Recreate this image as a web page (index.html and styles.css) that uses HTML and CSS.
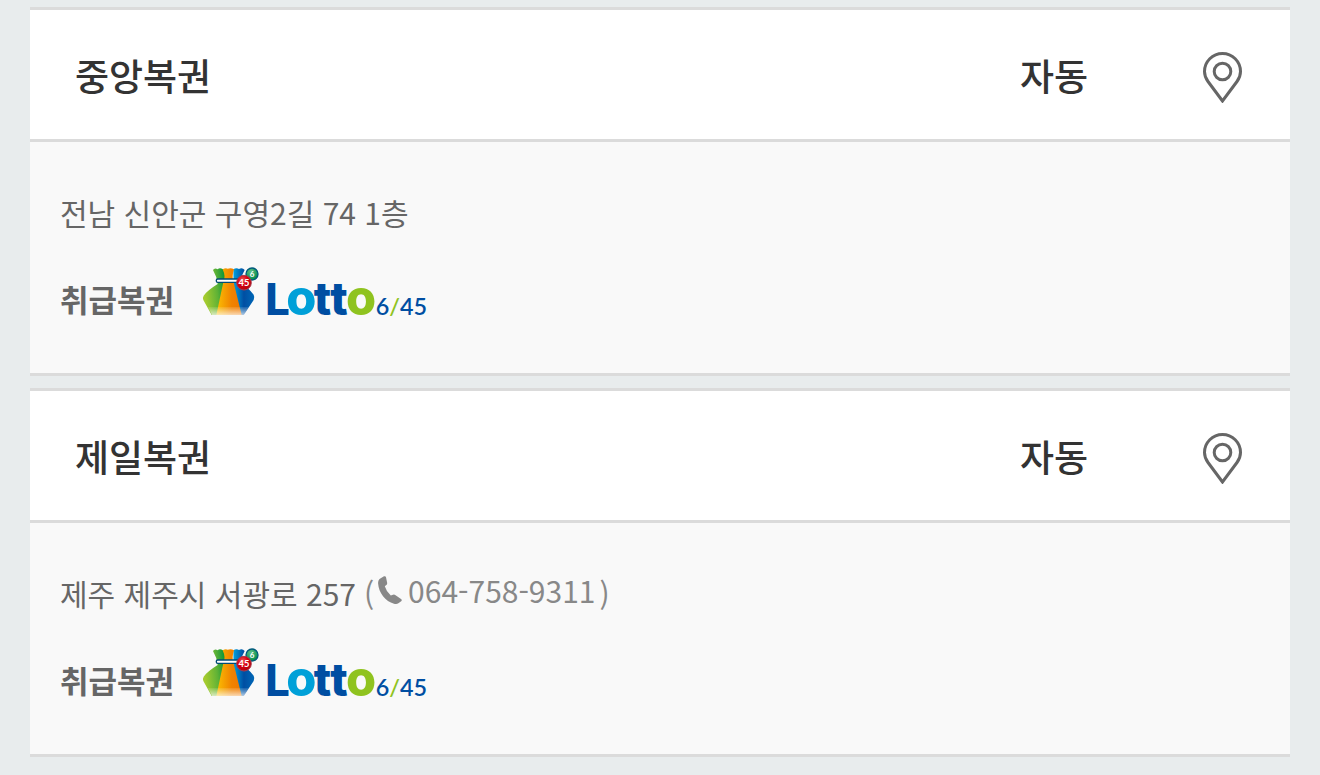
FILE: index.html
```html
<!DOCTYPE html>
<html lang="ko">
  <head>
    <meta charset="utf-8" />
    <meta name="viewport" content="width=device-width, initial-scale=1" />
    <title>복권 판매점</title>
    <link rel="stylesheet" href="styles.css" />
  </head>
  <body>
    <!-- shared icons -->
    <svg class="sprite" aria-hidden="true">
      <defs>
        <linearGradient id="bag-green" x1="0" x2="1" y1="0.2" y2="0">
          <stop offset="0" stop-color="#a5cb2f" />
          <stop offset="0.5" stop-color="#5fb236" />
          <stop offset="0.9" stop-color="#00913a" />
        </linearGradient>
        <linearGradient id="bag-orange" x1="0" x2="1">
          <stop offset="0" stop-color="#fbc003" />
          <stop offset="0.6" stop-color="#f08300" />
          <stop offset="1" stop-color="#ee7800" />
        </linearGradient>
        <linearGradient id="bag-blue" x1="0" x2="1">
          <stop offset="0" stop-color="#00a0dc" />
          <stop offset="0.5" stop-color="#004ea2" />
          <stop offset="1" stop-color="#0068b7" />
        </linearGradient>
        <linearGradient id="bag-shine" x1="0" y1="0" x2="0" y2="1">
          <stop offset="0" stop-color="#fff" stop-opacity="0.1" />
          <stop offset="1" stop-color="#fff" stop-opacity="0.7" />
        </linearGradient>
        <radialGradient id="ball-red" cx="0.4" cy="0.3" r="0.7">
          <stop offset="0" stop-color="#ef5a5a" />
          <stop offset="0.5" stop-color="#d7000f" />
          <stop offset="1" stop-color="#b5000c" />
        </radialGradient>
        <radialGradient id="ball-green" cx="0.4" cy="0.3" r="0.7">
          <stop offset="0" stop-color="#5fc08a" />
          <stop offset="1" stop-color="#008c45" />
        </radialGradient>
      </defs>
      <symbol id="pin" viewBox="0 0 39 51">
        <path d="M19.500 49 L5 29.500 C2.800 26.500 1.500 23.500 1.500 19.500 A18 18 0 0 1 37.500 19.500 C37.500 23.500 36.200 26.500 34 29.500 Z" fill="none" stroke="#666" stroke-width="3" />
        <circle cx="19.500" cy="19.500" r="8.300" fill="none" stroke="#666" stroke-width="3" />
      </symbol>
      <symbol id="phone" viewBox="0 0 24 28">
        <path d="M1.500 3 L6 .3 Q7.600 -.3 8 1.300 L9.200 7 Q9.300 8.500 8 9.200 L6.800 10.200 Q8.300 15.500 12.800 19.600 L15 18.800 Q16.200 18.200 17.200 19 L23 23 Q24.400 24 23.200 25.200 L20 27.500 Q18.400 28.400 16 27.700 C7.500 25.500 .6 16.500 .1 7.500 Q-.1 4.500 1.500 3Z" fill="#888" />
      </symbol>
      <symbol id="bag" viewBox="0 0 210 180">
        <path d="M54 30 Q59 22 68 28 Q74 22 84 28 L98 28 L88 78 L66 165 L50 165 L25 120 Q22 114 26 107 Q36 92 68 72 Q66 50 54 30Z" fill="url(#bag-green)" />
        <path d="M115 28 Q124 22 132 27 Q142 22 149 30 Q137 50 135 68 Q160 82 176 104 Q180 112 176 120 L146 165 L132 165 L116 78Z" fill="url(#bag-blue)" />
        <path d="M83 28 Q92 22 98 26 Q108 22 117 28 Q110 50 115 64 L140 165 L64 165 L85 66 Q93 50 83 28Z" fill="url(#bag-orange)" />
        <path d="M39 141 H161 L147 165 H51Z" fill="url(#bag-shine)" />
        <rect x="64" y="57" width="68" height="10" rx="4" fill="#fff" stroke="#004b75" stroke-width="4" />
        <circle cx="171" cy="42" r="18" fill="url(#ball-green)" stroke="#005b7c" stroke-width="4" />
        <circle cx="147" cy="68" r="22" fill="url(#ball-red)" stroke="#a83b4d" stroke-width="3" />
      </symbol>
    </svg>

    <main class="store-list">
      <article class="store">
        <header class="store-head">
          <h2 class="store-name">중앙복권</h2>
          <span class="store-type">자동</span>
          <a class="store-map" href="#" aria-label="중앙복권 지도 보기">
            <svg class="icon-pin"><use href="#pin" /></svg>
          </a>
        </header>
        <div class="store-body">
          <p class="store-address">전남 신안군 구영2길 74 1층</p>
          <div class="store-goods">
            <strong>취급복권</strong>
            <svg class="logo-lotto" viewBox="0 0 705 180" role="img" aria-label="Lotto 6/45">
              <use href="#bag" width="210" height="180" />
              <text class="ball-text" x="147" y="78" font-size="28" text-anchor="middle">45</text>
              <text class="ball-text" x="171" y="50" font-size="24" text-anchor="middle">6</text>
              <text class="logo-text" y="165" fill="#004ea2"><tspan x="211" font-size="130">L</tspan><tspan x="274" font-size="146" fill="#00a0d8">o</tspan><tspan x="356 406" font-size="137">tt</tspan><tspan x="453" font-size="146" fill="#8fc31f">o</tspan></text>
              <text class="logo-number" x="542" y="165" font-size="70" fill="#004ea2">6<tspan fill="#8fc31f">/</tspan>45</text>
            </svg>
          </div>
        </div>
      </article>

      <article class="store">
        <header class="store-head">
          <h2 class="store-name">제일복권</h2>
          <span class="store-type">자동</span>
          <a class="store-map" href="#" aria-label="제일복권 지도 보기">
            <svg class="icon-pin"><use href="#pin" /></svg>
          </a>
        </header>
        <div class="store-body">
          <p class="store-address">
            제주 제주시 서광로 257
            <span class="store-phone">(<a href="tel:064-758-9311"><svg class="icon-phone"><use href="#phone" /></svg>064-758-9311</a>)</span>
          </p>
          <div class="store-goods">
            <strong>취급복권</strong>
            <svg class="logo-lotto" viewBox="0 0 705 180" role="img" aria-label="Lotto 6/45">
              <use href="#bag" width="210" height="180" />
              <text class="ball-text" x="147" y="78" font-size="28" text-anchor="middle">45</text>
              <text class="ball-text" x="171" y="50" font-size="24" text-anchor="middle">6</text>
              <text class="logo-text" y="165" fill="#004ea2"><tspan x="211" font-size="130">L</tspan><tspan x="274" font-size="146" fill="#00a0d8">o</tspan><tspan x="356 406" font-size="137">tt</tspan><tspan x="453" font-size="146" fill="#8fc31f">o</tspan></text>
              <text class="logo-number" x="542" y="165" font-size="70" fill="#004ea2">6<tspan fill="#8fc31f">/</tspan>45</text>
            </svg>
          </div>
        </div>
      </article>
    </main>
  </body>
</html>
```

FILE: styles.css
```css
* {
  box-sizing: border-box;
}
body {
  margin: 0;
  background-color: #e8eced;
  color: #333;
  font-family: "Noto Sans CJK KR", sans-serif;
}
h2,
p {
  margin: 0;
}
a {
  color: inherit;
  text-decoration: none;
}
.sprite {
  position: absolute;
  width: 0;
  height: 0;
}
.store-list {
  display: flex;
  flex-direction: column;
  gap: 12px;
  padding: 7px 30px 18px;
}
.store {
  border-top: 3px solid #dbdbdb;
  border-bottom: 3px solid #dbdbdb;
  background-color: #f9f9f9;
}
.store-head {
  display: flex;
  align-items: center;
  padding: 37px 48px 36px 45px;
  border-bottom: 3px solid #dbdbdb;
  background-color: #fff;
  font-size: 37px;
  line-height: 56px;
}
.store-name {
  flex: 1;
  font-size: 37px;
  font-weight: 500;
}
.store-type {
  width: 183px;
  font-weight: 500;
}
.store-map {
  display: flex;
  padding-top: 4px;
}
.icon-pin {
  width: 39px;
  height: 51px;
}
.store-body {
  padding: 46px 30px 53px;
  color: #666;
  font-size: 31px;
  line-height: 48px;
}
.store-address {
  display: flex;
  align-items: center;
  gap: 8px;
  font-size: 30px;
}
.store-phone {
  display: flex;
  align-items: center;
  gap: 4px;
  color: #888;
}
.store-phone a {
  display: flex;
  align-items: center;
  gap: 6px;
  padding-bottom: 6px;
  line-height: 42px;
}
.icon-phone {
  width: 24px;
  height: 28px;
}
.store-goods {
  display: flex;
  align-items: center;
  gap: 21px;
  margin-top: 24px;
  height: 60px;
}
.store-goods strong {
  padding-top: 18px;
  font-weight: 700;
}
.logo-lotto {
  width: 235px;
  height: 60px;
  overflow: visible;
}
.logo-text {
  font-family: Inter, sans-serif;
  font-weight: 800;
}
.logo-number {
  font-family: Lato, sans-serif;
  font-weight: 600;
}
.ball-text {
  fill: #fff;
  font-family: Lato, sans-serif;
  font-weight: 700;
}
```
